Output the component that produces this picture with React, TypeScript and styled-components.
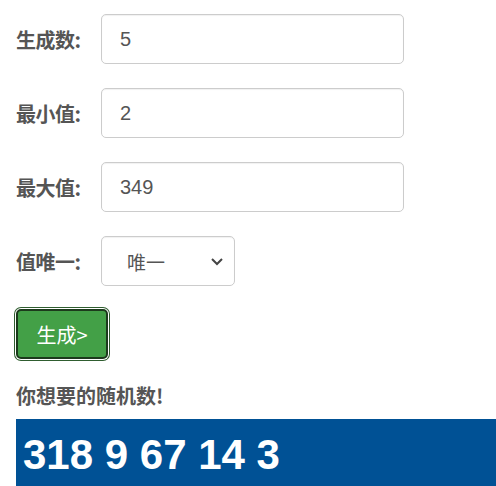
import styled, { createGlobalStyle } from 'styled-components';

const Global = createGlobalStyle`
  html, body {
    margin: 0;
    padding: 0;
    overflow: hidden;
    background: #fff;
  }
  body {
    font-family: "Liberation Sans", Arial, "Noto Sans CJK SC", sans-serif;
    color: #555;
  }
`;

const Page = styled.div`
  padding: 14px 0 0 16px;
  display: flex;
  flex-direction: column;
`;

const Row = styled.div`
  display: flex;
  align-items: center;
  height: 50px;
  margin-bottom: 24px;
`;

const Label = styled.label`
  width: 85px;
  font-size: 20px;
  font-weight: bold;
  color: #555;
  font-family: "Noto Sans CJK SC", sans-serif;
  letter-spacing: -0.5px;
`;

const Field = styled.div<{ $w: number }>`
  box-sizing: border-box;
  width: ${(p) => p.$w}px;
  height: 50px;
  border: 1px solid #ccc;
  border-radius: 5px;
  display: flex;
  align-items: center;
  padding-left: 18px;
  font-size: 20px;
  color: #555;
  box-shadow: inset 0 1px 1px rgba(0, 0, 0, 0.06);
`;

const SelectText = styled.span`
  flex: 1;
  padding-left: 7px;
  font-family: "Noto Sans CJK SC", sans-serif;
  font-size: 19px;
`;

const Chevron = styled.svg`
  margin-right: 10px;
`;

const GenButton = styled.button`
  align-self: flex-start;
  box-sizing: border-box;
  width: 92px;
  height: 50px;
  margin: -1px 0 0 0;
  border: 2px solid #1c3a1c;
  border-radius: 5px;
  background: #43a047;
  color: #fff;
  font-size: 20px;
  font-family: "Noto Sans CJK SC", sans-serif;
  box-shadow: 0 0 0 1px #fff, 0 0 0 2px #2f5d2f;
  padding: 0;
`;

const Title = styled.div`
  margin-top: 22px;
  font-size: 20px;
  font-weight: bold;
  font-family: "Noto Sans CJK SC", sans-serif;
  color: #555;
`;

const Result = styled.div`
  margin-top: 9px;
  height: 80px;
  background: #005195;
  color: #fff;
  font-family: "Liberation Sans", Arial, sans-serif;
  font-weight: bold;
  font-size: 42px;
  padding: 8px 0 0 7px;
  box-sizing: border-box;
  line-height: 56px;
`;

export default function App() {
  return (
    <Page>
      <Global />
      <Row>
        <Label>生成数:</Label>
        <Field $w={303}>5</Field>
      </Row>
      <Row>
        <Label>最小值:</Label>
        <Field $w={303}>2</Field>
      </Row>
      <Row>
        <Label>最大值:</Label>
        <Field $w={303}>349</Field>
      </Row>
      <Row>
        <Label>值唯一:</Label>
        <Field $w={134}>
          <SelectText>唯一</SelectText>
          <Chevron width="14" height="10" viewBox="0 0 14 10">
            <path d="M2 3 L7 8 L12 3" fill="none" stroke="#444" strokeWidth="2" />
          </Chevron>
        </Field>
      </Row>
      <GenButton>生成&gt;</GenButton>
      <Title>你想要的随机数!</Title>
      <Result>318 9 67 14 3</Result>
    </Page>
  );
}
